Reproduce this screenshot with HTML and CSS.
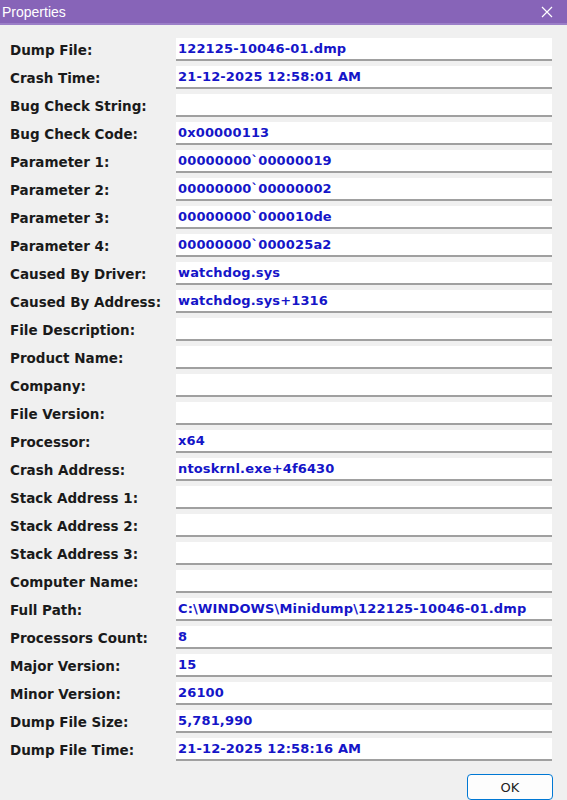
FILE: index.html
```html
<!DOCTYPE html>
<html lang="en">
<head>
  <meta charset="UTF-8" />
  <title>Properties</title>
  <link rel="stylesheet" href="styles.css">
</head>
<body>
  <div class="dialog">
    <div class="titlebar">
      <span class="title">Properties</span>
      <svg class="close" width="12" height="12" viewBox="0 0 12 12">
        <path d="M1 1 L11 11 M11 1 L1 11" stroke="#fff" stroke-width="1.2" fill="none" />
      </svg>
    </div>

    <div class="props">
      <div class="row"><span class="label">Dump File:</span><span class="value">122125-10046-01.dmp</span></div>
      <div class="row"><span class="label">Crash Time:</span><span class="value">21-12-2025 12:58:01 AM</span></div>
      <div class="row"><span class="label">Bug Check String:</span><span class="value"></span></div>
      <div class="row"><span class="label">Bug Check Code:</span><span class="value">0x00000113</span></div>
      <div class="row"><span class="label">Parameter 1:</span><span class="value">00000000`00000019</span></div>
      <div class="row"><span class="label">Parameter 2:</span><span class="value">00000000`00000002</span></div>
      <div class="row"><span class="label">Parameter 3:</span><span class="value">00000000`000010de</span></div>
      <div class="row"><span class="label">Parameter 4:</span><span class="value">00000000`000025a2</span></div>
      <div class="row"><span class="label">Caused By Driver:</span><span class="value">watchdog.sys</span></div>
      <div class="row"><span class="label">Caused By Address:</span><span class="value">watchdog.sys+1316</span></div>
      <div class="row"><span class="label">File Description:</span><span class="value"></span></div>
      <div class="row"><span class="label">Product Name:</span><span class="value"></span></div>
      <div class="row"><span class="label">Company:</span><span class="value"></span></div>
      <div class="row"><span class="label">File Version:</span><span class="value"></span></div>
      <div class="row"><span class="label">Processor:</span><span class="value">x64</span></div>
      <div class="row"><span class="label">Crash Address:</span><span class="value">ntoskrnl.exe+4f6430</span></div>
      <div class="row"><span class="label">Stack Address 1:</span><span class="value"></span></div>
      <div class="row"><span class="label">Stack Address 2:</span><span class="value"></span></div>
      <div class="row"><span class="label">Stack Address 3:</span><span class="value"></span></div>
      <div class="row"><span class="label">Computer Name:</span><span class="value"></span></div>
      <div class="row"><span class="label">Full Path:</span><span class="value">C:\WINDOWS\Minidump\122125-10046-01.dmp</span></div>
      <div class="row"><span class="label">Processors Count:</span><span class="value">8</span></div>
      <div class="row"><span class="label">Major Version:</span><span class="value">15</span></div>
      <div class="row"><span class="label">Minor Version:</span><span class="value">26100</span></div>
      <div class="row"><span class="label">Dump File Size:</span><span class="value">5,781,990</span></div>
      <div class="row"><span class="label">Dump File Time:</span><span class="value">21-12-2025 12:58:16 AM</span></div>
    </div>

    <div class="buttons">
      <button class="btn-ok">OK</button>
    </div>
  </div>
</body>
</html>
```

FILE: styles.css
```css
body {
  margin: 0;
  padding: 0;
  background: #f0f0f0;
  font-family: 'DejaVu Sans', Verdana, sans-serif;
  overflow: hidden;
}

.dialog {
  width: 567px;
  height: 800px;
  background: #f0f0f0;
}

.titlebar {
  height: 23px;
  background: #8764b8;
  border-bottom: 2px solid #9b7fc8;
  display: flex;
  align-items: center;
  justify-content: space-between;
  padding: 0 14px 0 2px;
}

.title {
  color: #fff;
  font-family: 'Liberation Sans', Arial, sans-serif;
  font-size: 14px;
}

.props {
  padding: 13px 15px 0 10px;
  display: flex;
  flex-direction: column;
  gap: 5px;
}

.row {
  display: flex;
  align-items: center;
  height: 23px;
}

.label {
  width: 166px;
  font-size: 13.5px;
  font-weight: bold;
  color: #1a1a1a;
}

.value {
  flex: 1;
  height: 21px;
  line-height: 21px;
  background: #fff;
  border-bottom: 2px solid #a0a0a0;
  padding-left: 2px;
  font-size: 13px;
  font-weight: bold;
  color: #1515c8;
  letter-spacing: 0.15px;
  white-space: nowrap;
}

.buttons {
  display: flex;
  justify-content: flex-end;
  padding: 13px 14px 0 0;
}

.btn-ok {
  width: 86px;
  height: 26px;
  background: #fdfdfd;
  border: 1px solid #0078d4;
  border-radius: 4px;
  font-family: 'DejaVu Sans', Verdana, sans-serif;
  font-size: 13px;
  color: #222;
}
```
